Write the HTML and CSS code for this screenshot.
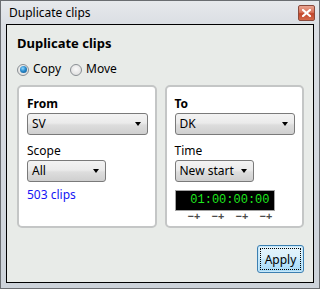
FILE: index.html
```html
<!DOCTYPE html>
<html>
<head>
<meta charset="utf-8">
<link rel="stylesheet" href="styles.css">
</head>
<body>
<div class="window">
  <div class="titlebar">
    <span class="title">Duplicate clips</span>
    <span class="close"><svg width="9" height="8" viewBox="0 0 9 8"><path d="M1 1 L8 7 M8 1 L1 7" stroke="#fff" stroke-width="2.2" stroke-linecap="square"/></svg></span>
  </div>
  <div class="client">
    <h1 class="heading">Duplicate clips</h1>
    <div class="radios">
      <label class="radio"><span class="ring checked"></span>Copy</label>
      <label class="radio"><span class="ring"></span>Move</label>
    </div>
    <div class="cards">
      <div class="card">
        <div class="label bold">From</div>
        <div class="select">SV<span class="arrow"></span></div>
        <div class="label gap">Scope</div>
        <div class="select short">All<span class="arrow"></span></div>
        <a class="link">503 clips</a>
      </div>
      <div class="card">
        <div class="label bold">To</div>
        <div class="select">DK<span class="arrow"></span></div>
        <div class="label gap">Time</div>
        <div class="select short">New start<span class="arrow"></span></div>
        <div class="timecode">01:00:00:00</div>
        <div class="steppers">
          <span class="pair">−+</span><span class="pair">−+</span><span class="pair">−+</span><span class="pair">−+</span>
        </div>
      </div>
    </div>
    <div class="actions">
      <span class="apply"><span class="focus">Apply</span></span>
    </div>
  </div>
</div>
</body>
</html>
```
FILE: styles.css
```css
* { box-sizing: border-box; }
html, body { margin: 0; padding: 0; }
body {
  width: 320px; height: 289px;
  font-family: "Noto Sans", "Liberation Sans", sans-serif;
  font-size: 12px;
  color: #000;
  background: #fff;
}
.window {
  width: 320px; height: 289px;
  border: 1px solid #6a6d71;
  background: linear-gradient(to bottom, #e6e9ec 0, #dadee3 24px, #cdd3da 100%);
  display: flex; flex-direction: column;
}
.titlebar {
  height: 23px;
  display: flex; justify-content: space-between; align-items: flex-start;
  padding-left: 8px;
}
.title {
  line-height: 16px;
  margin-top: 4px;
  color: #000;
}
.close {
  width: 17px; height: 16px;
  margin-top: 4px; margin-right: 4px;
  border: 1px solid #8b4a3c;
  border-radius: 2px;
  background: linear-gradient(to bottom, #eaa592 0%, #d8735a 45%, #c2452a 55%, #d46a4c 100%);
  display: flex; align-items: center; justify-content: center;
}
.client {
  height: 259px;
  margin: 0 5px;
  border: 1px solid #000;
  background: #e8ebe8;
  padding: 10px 9px 0 10px;
  display: flex; flex-direction: column;
}
.heading {
  margin: 0;
  font-size: 13px;
  font-weight: 700;
  line-height: 17px;
}
.radios {
  margin-top: 9px;
  display: flex;
  height: 16px;
  line-height: 16px;
}
.radio {
  display: flex; align-items: center;
  margin-right: 9px;
}
.ring {
  width: 12px; height: 12px;
  border-radius: 50%;
  border: 1px solid #8a8f94;
  background: radial-gradient(circle at 50% 40%, #fafafa 0, #d8d8d8 100%);
  margin-right: 4px;
  margin-top: 1px;
  position: relative;
}
.ring.checked::after {
  content: "";
  position: absolute;
  left: 1.5px; top: 1.5px;
  width: 7px; height: 7px;
  border-radius: 50%;
  background: radial-gradient(circle at 40% 35%, #8fd8ff 0, #2a8acb 45%, #0b4f86 100%);
}
.cards {
  margin-top: 8px;
  display: grid;
  grid-template-columns: 1fr 1fr;
  gap: 8px;
}
.card {
  height: 143px;
  background: #fff;
  border: 2px solid #c4c6c6;
  border-radius: 5px;
  padding: 9px 7px 0 8px;
  display: flex; flex-direction: column; align-items: flex-start;
}
.label {
  line-height: 16px;
}
.bold { font-weight: 700; }
.label.gap { margin-top: 8px; }
.select {
  margin-top: 1px;
  width: 100%;
  height: 22px;
  border: 1px solid #7a7a7a;
  border-radius: 3px;
  background: linear-gradient(to bottom, #f3f3f3 0%, #ebebeb 45%, #dddddd 55%, #cfcfcf 100%);
  padding-left: 4px;
  line-height: 20px;
  display: flex; justify-content: space-between; align-items: center;
  padding-right: 6px;
}
.select.short { width: 79px; }
.arrow {
  width: 0; height: 0;
  border-left: 3.5px solid transparent;
  border-right: 3.5px solid transparent;
  border-top: 4px solid #000;
}
.link {
  margin-top: 5px;
  line-height: 16px;
  color: #1414f5;
}
.timecode {
  margin-top: 8px;
  width: 100px; height: 21px;
  background: #000;
  border: 1px solid #a3a3a3;
  color: #1ee81e;
  font-family: "Liberation Mono", monospace;
  font-size: 12px;
  line-height: 19px;
  text-align: right;
  padding-right: 4px;
}
.steppers {
  display: flex;
  gap: 10px;
  padding-left: 13px;
  margin-top: 0px;
}
.pair {
  width: 14px;
  font-size: 11px;
  line-height: 10px;
  color: #4a4a4a;
  font-weight: 700;
}
.actions {
  margin-top: 17px;
  display: flex; justify-content: flex-end;
}
.apply {
  width: 47px; height: 28px;
  border: 1px solid #3c7fb1;
  border-radius: 3px;
  background: linear-gradient(to bottom, #e5f4fc 0%, #d8effb 45%, #bee6fd 55%, #a7d9f5 100%);
  box-shadow: inset 0 0 0 1px #c6e7f9;
  padding: 2px;
  display: flex;
}
.focus {
  flex: 1;
  border: 1px dotted #000;
  display: flex; align-items: center; justify-content: center;
  font-size: 12px;
}
```
